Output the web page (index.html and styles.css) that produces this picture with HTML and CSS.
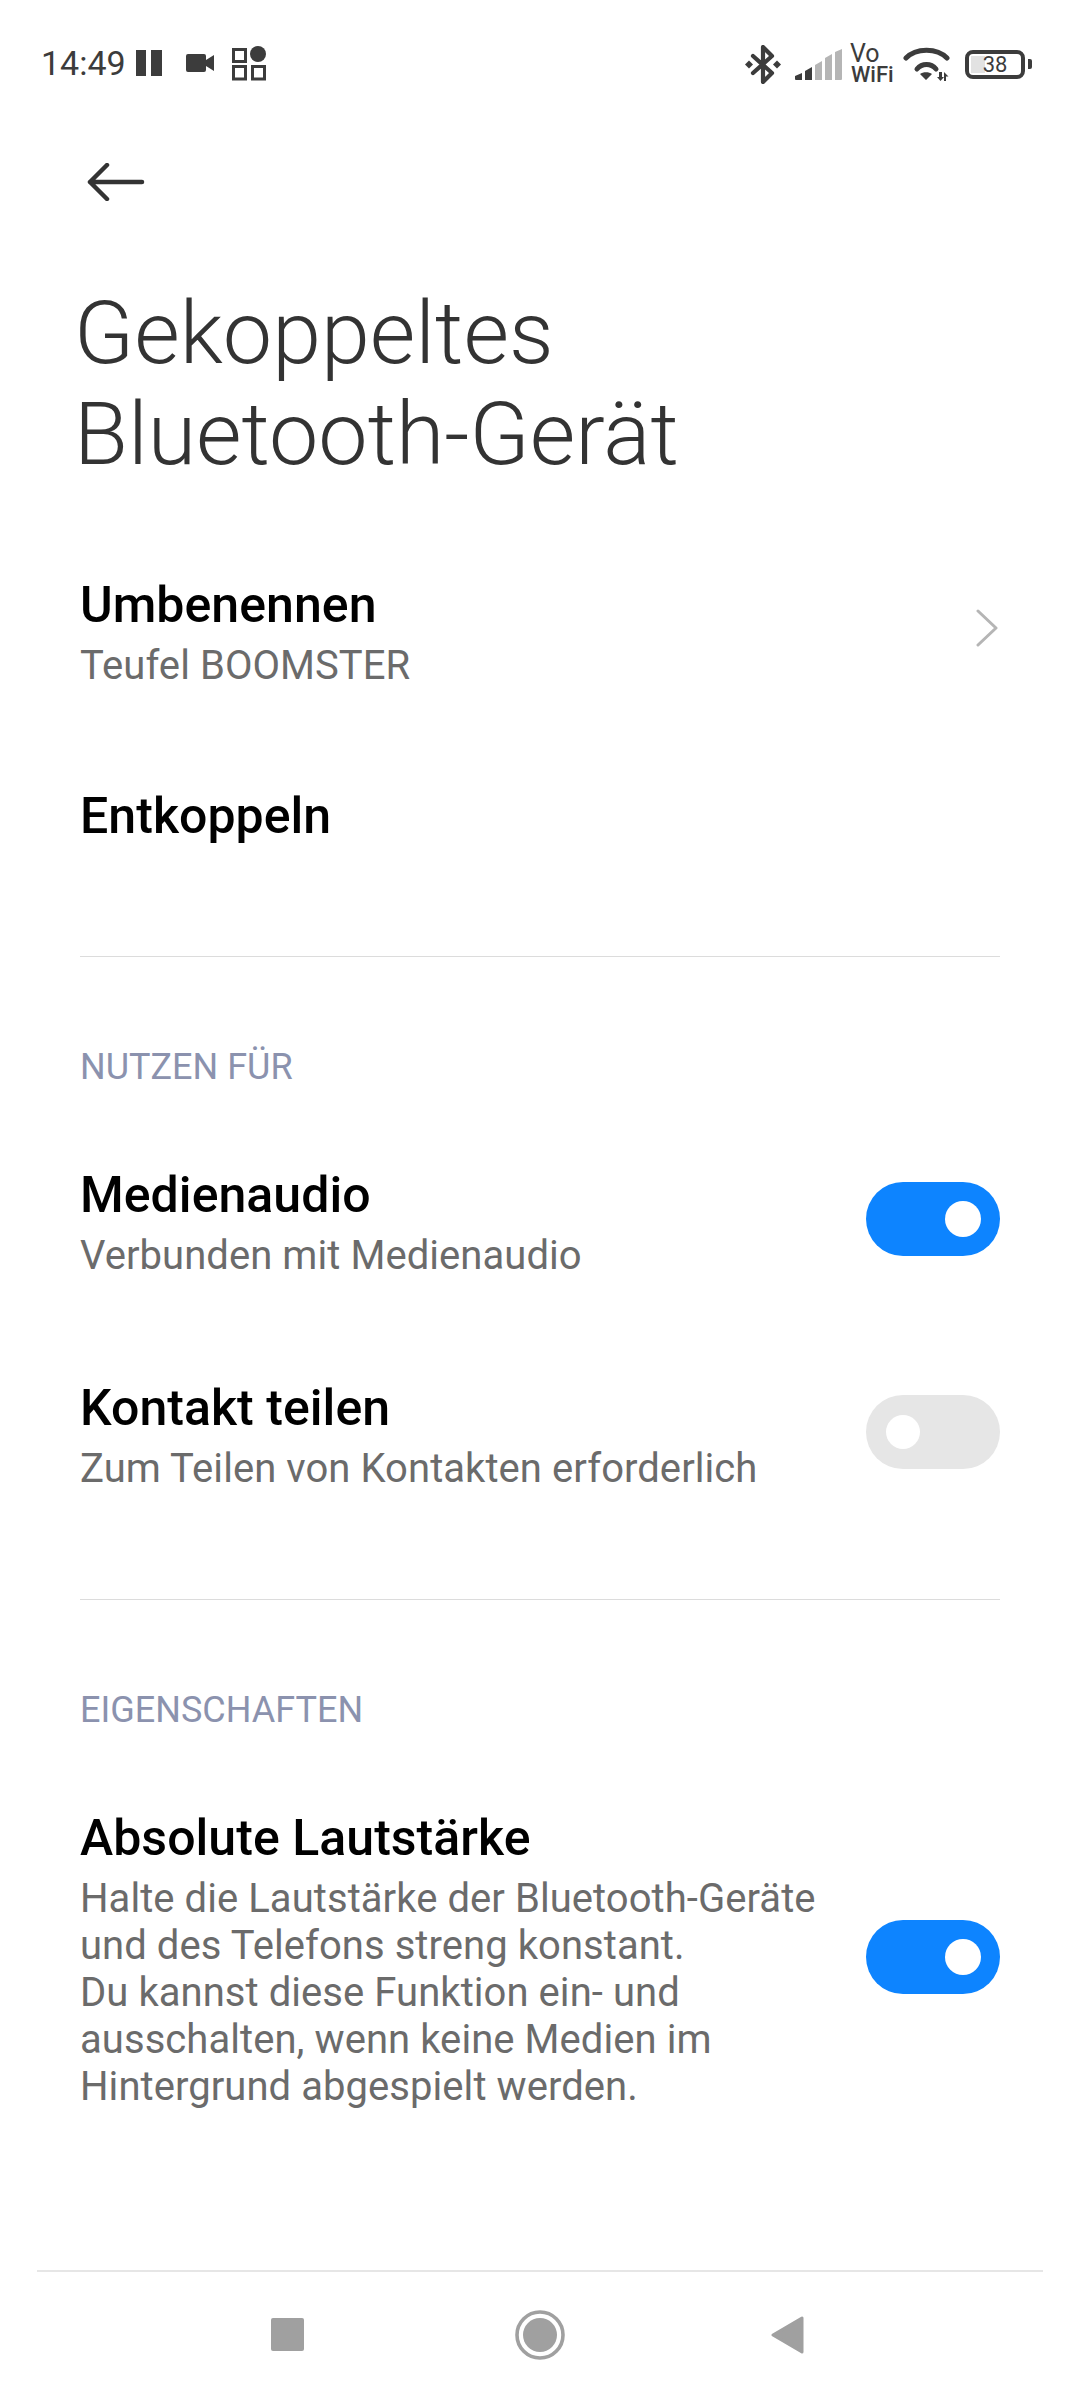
FILE: index.html
```html
<!DOCTYPE html>
<html lang="de">
<head>
<meta charset="utf-8">
<title>Gekoppeltes Bluetooth-Gerät</title>
<link rel="stylesheet" href="styles.css">
</head>
<body>
<div class="screen">
  <header class="status">
    <div class="status-left">
      <span class="time">14:49</span>
      <svg class="ic-pause" width="26" height="26" viewBox="0 0 26 26"><path fill="#3c3c3c" d="M0 0h10v26H0zM15 0h11v26H15z"/></svg>
      <svg class="ic-cam" width="28" height="18" viewBox="0 0 28 18"><path fill="#3c3c3c" d="M2 0h16a2 2 0 0 1 2 2v4l8-5v16l-8-5v4a2 2 0 0 1-2 2H2a2 2 0 0 1-2-2V2a2 2 0 0 1 2-2z"/></svg>
      <svg class="ic-grid" width="36" height="35" viewBox="0 0 36 35"><g fill="none" stroke="#3c3c3c" stroke-width="3"><rect x="1.500" y="3.500" width="12" height="12"/><rect x="1.500" y="20.500" width="12" height="12.500"/><rect x="20.500" y="20.500" width="12" height="12.500"/></g><circle cx="26" cy="8" r="8" fill="#3c3c3c"/></svg>
    </div>
    <div class="status-right">
      <svg class="ic-bt" width="36" height="39" viewBox="0 0 36 39"><g fill="none" stroke="#3c3c3c" stroke-width="4.200" stroke-linecap="round" stroke-linejoin="round"><path d="M8 11l19 17-9 9V2l9 9L8 28"/></g><path fill="#3c3c3c" d="M4 15.500l4 4-4 4-4-4zM32 15.500l4 4-4 4-4-4z"/></svg>
      <svg class="ic-signal" width="48" height="31" viewBox="0 0 48 31"><path fill="#3c3c3c" d="M1 27l7-3v7H2a1 1 0 0 1-1-1zM11 22l7-4v13h-7z"/><path fill="#b5b5b5" d="M21 16l7-4v19h-7zM31 9l7-4v26h-7zM41 3l7-3v30a1 1 0 0 1-1 1h-6z"/></svg>
      <div class="vowifi"><span class="vo">Vo</span><span class="wifi">WiFi</span></div>
      <svg class="ic-wifi" width="47" height="34" viewBox="0 0 47 34"><g fill="none" stroke="#3c3c3c" stroke-width="5" stroke-linecap="round"><path d="M3 11C13 0.500 34 0.500 44 11"/><path d="M14 22C19 16 28 16 33 22"/></g><path fill="#3c3c3c" d="M17 27c3-2.500 9-2.500 12 0l-6 6zM36 25h3v5h2l-3.500 4-3.500-4h2zM41 34v-9l4.500 4.500H43V34z"/></svg>
      <div class="battery">
        <div class="battery-body"><span class="battery-fill"></span><span class="battery-num">38</span></div>
        <span class="battery-tip"></span>
      </div>
    </div>
  </header>

  <div class="back">
    <svg width="58" height="38" viewBox="0 0 58 38"><path fill="none" stroke="#333" stroke-width="4.500" stroke-linecap="round" stroke-linejoin="round" d="M3 19h52M20 2L3 19l17 17"/></svg>
  </div>

  <h1 class="title">Gekoppeltes<br>Bluetooth-Gerät</h1>

  <section class="group group-first">
    <div class="row row-rename">
      <div class="row-text">
        <div class="row-title">Umbenennen</div>
        <div class="row-sub">Teufel BOOMSTER</div>
      </div>
      <svg class="chevron" width="22" height="38" viewBox="0 0 22 38"><path fill="none" stroke="#b5b5b5" stroke-width="3" stroke-linecap="round" stroke-linejoin="round" d="M2 2l18 17L2 36"/></svg>
    </div>
    <div class="row row-unpair">
      <div class="row-title">Entkoppeln</div>
    </div>
  </section>

  <section class="group group-use">
    <div class="label">NUTZEN FÜR</div>
    <div class="row row-media">
      <div class="row-text">
        <div class="row-title">Medienaudio</div>
        <div class="row-sub">Verbunden mit Medienaudio</div>
      </div>
      <span class="toggle on"><span class="knob"></span></span>
    </div>
    <div class="row row-contact">
      <div class="row-text">
        <div class="row-title">Kontakt teilen</div>
        <div class="row-sub">Zum Teilen von Kontakten erforderlich</div>
      </div>
      <span class="toggle off"><span class="knob"></span></span>
    </div>
  </section>

  <section class="group group-props">
    <div class="label">EIGENSCHAFTEN</div>
    <div class="row row-abs">
      <div class="row-text">
        <div class="row-title">Absolute Lautstärke</div>
        <div class="row-sub">Halte die Lautstärke der Bluetooth-Geräte<br>und des Telefons streng konstant.<br>Du kannst diese Funktion ein- und<br>ausschalten, wenn keine Medien im<br>Hintergrund abgespielt werden.</div>
      </div>
      <span class="toggle on"><span class="knob"></span></span>
    </div>
  </section>

  <nav class="navbar">
    <span class="nav-square"></span>
    <svg class="nav-home" width="50" height="50" viewBox="0 0 50 50"><circle cx="25" cy="25" r="23" fill="none" stroke="#a0a0a0" stroke-width="3.600"/><circle cx="25" cy="25" r="17" fill="#a0a0a0"/></svg>
    <svg class="nav-back" width="33" height="38" viewBox="0 0 33 38"><path fill="#a0a0a0" stroke="#a0a0a0" stroke-width="3" stroke-linejoin="round" d="M31 2v34L2 19z"/></svg>
  </nav>
</div>
</body>
</html>
```

FILE: styles.css
```css
* { box-sizing: border-box; }
html, body { margin: 0; padding: 0; background: #fff; }
body { font-family: Roboto, "Noto Sans", sans-serif; }

.screen {
  width: 1080px;
  height: 2400px;
  display: flex;
  flex-direction: column;
  overflow: hidden;
  background: #fff;
}

/* status bar */
.status {
  height: 100px;
  padding: 44px 48px 0 41px;
  display: flex;
  justify-content: space-between;
  align-items: flex-start;
}
.status-left { display: flex; align-items: center; height: 38px; }
.time { font-size: 34px; line-height: 38px; color: #3c3c3c; width: 95px; }
.ic-cam { margin-left: 24px; }
.ic-grid { margin-left: 18px; }
.status-right { display: flex; align-items: center; height: 40px; }
.ic-signal { margin-left: 13px; }
.vowifi {
  margin-left: 8px;
  width: 45px;
  display: flex;
  flex-direction: column;
  line-height: 21px;
  color: #3c3c3c;
}
.vo { font-size: 25px; font-weight: 400; }
.wifi { font-size: 22px; font-weight: 500; margin-left: 1px; }
.ic-wifi { margin-left: 8px; }
.battery { margin-left: 15px; display: flex; align-items: center; gap: 3px; }
.battery-body {
  width: 60px;
  height: 29px;
  border: 4px solid #3c3c3c;
  border-radius: 8px;
  display: flex;
  align-items: center;
  justify-content: center;
  position: relative;
}
.battery-fill {
  position: absolute;
  left: 2px;
  top: 2px;
  bottom: 2px;
  width: 14px;
  background: #e2e2e2;
}
.battery-num { position: relative; font-size: 22px; line-height: 21px; color: #3c3c3c; }
.battery-tip { width: 4px; height: 10px; background: #3c3c3c; border-radius: 0 2px 2px 0; }

/* back + title */
.back { height: 38px; margin: 63px 0 0 87px; line-height: 0; }
.title {
  margin: 81px 0 0 74px;
  font-size: 88px;
  line-height: 101px;
  font-weight: 300;
  color: #333;
}

/* groups */
.group { margin: 0 80px; }
.group-first { margin-top: 85px; height: 388px; border-bottom: 1px solid #dcdcdc; }
.group-use { height: 643px; border-bottom: 1px solid #dcdcdc; }
.group-props { flex: 1; }

.row { display: flex; justify-content: space-between; align-items: center; }
.row-title { font-size: 50px; line-height: 62px; font-weight: 500; color: #000; letter-spacing: 0.05px; }
.row-sub { font-size: 40px; line-height: 47px; color: #6b6b6b; margin-top: 6px; letter-spacing: 0.06px; }
.row-rename { height: 124px; }
.row-unpair { margin-top: 92px; height: 62px; }
.row-media, .row-contact { height: 124px; }
.row-media { margin-top: 70px; }
.row-contact { margin-top: 89px; }
.row-media .row-text, .row-contact .row-text { margin-top: 4px; }
.row-abs { margin-top: 77px; }
.row-abs .toggle { margin-bottom: 4px; }

.label { font-size: 36px; line-height: 40px; color: #8b92ae; margin-top: 90px; }

.chevron { margin-right: 2px; margin-bottom: 6px; }

/* toggles */
.toggle {
  width: 134px;
  height: 74px;
  border-radius: 37px;
  display: flex;
  align-items: center;
  flex: none;
}
.toggle.on { background: #0d84ff; justify-content: flex-end; padding-right: 19px; }
.toggle.off { background: #e6e6e6; padding-left: 20px; }
.knob { border-radius: 50%; background: #fff; }
.on .knob { width: 36px; height: 36px; }
.off .knob { width: 34px; height: 34px; }

/* nav */
.navbar {
  height: 130px;
  margin: 0 37px;
  border-top: 2px solid #e6e6e6;
  display: flex;
  align-items: center;
  justify-content: space-between;
  padding: 0 239px 3px 234px;
}
.nav-square { width: 33px; height: 33px; background: #a0a0a0; border-radius: 2px; }
.nav-home { margin-left: 5px; }
```
